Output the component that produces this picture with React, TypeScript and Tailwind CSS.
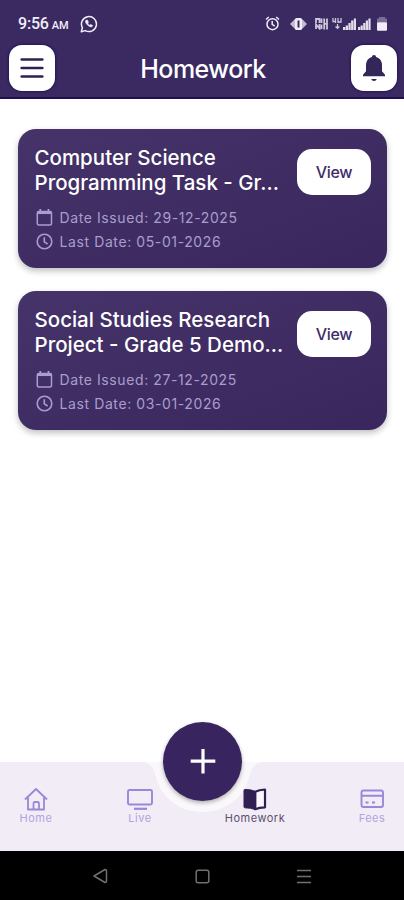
import type { ReactNode } from "react";
import clsx from "clsx";

const homework = [
  { id: 1, lines: ["Computer Science", "Programming Task - Gr..."], issued: "29-12-2025", last: "05-01-2026" },
  { id: 2, lines: ["Social Studies Research", "Project - Grade 5 Demo..."], issued: "27-12-2025", last: "03-01-2026" },
];

function StatusBar() {
  return (
    <div className="flex h-[45px] items-center pt-[2px] pl-[18px] pr-[17px] text-[#f1edf8]">
      <div className="flex items-baseline font-['Roboto',sans-serif] font-medium leading-none">
        <span className="text-[16px] tracking-[-0.2px]">9:56</span>
        <span className="ml-[3px] text-[11px]">AM</span>
      </div>
      <svg className="ml-[11px] size-[18px]" viewBox="0 0 18 18" fill="none" stroke="currentColor" strokeWidth="1.5">
        <path d="M1.3 16.7l1.1-4A7.5 7.5 0 1 1 5.3 15.6z" strokeLinejoin="round" />
        <path d="M6 5.2c-1 1-.6 2.6 1.3 4.6 2 2 3.8 2.6 4.9 1.6l.5-.8-1.9-1.2-1 .8c-1-.4-1.7-1.2-2-2l.7-.9L7.4 5z" fill="currentColor" strokeWidth="0.6" />
      </svg>
      <div className="ml-auto flex items-center">
        <svg className="size-[15px]" viewBox="0 0 15 15" fill="none" stroke="currentColor" strokeWidth="1.5">
          <circle cx="7.5" cy="8.2" r="5.5" />
          <path d="M7.2 5v3.4l2.5 1.7M1 3.5l2.8-2.5M14 3.5l-2.8-2.5" />
        </svg>
        <svg className="ml-[10px] h-[14px] w-[17px]" viewBox="0 0 17 14" fill="currentColor">
          <path d="M0 7l5-5h7l5 5-5 5H5z" opacity="0.75" />
          <rect x="5" y="1" width="7" height="12" rx="1.5" />
          <rect x="7.5" y="3.5" width="2" height="7" fill="#3a2a61" />
        </svg>
        <svg className="ml-[8px] h-[12px] w-[13px]" viewBox="0 0 13 12" fill="none" stroke="currentColor" strokeWidth="1.8" opacity="0.8">
          <path d="M1 5V1h3.500v4M1 11V6.500l3.500 4V6M6.500 .5v4.500M6.500 6.500V11M9.200 .5v11M12 .5v11M9.200 5.800h3" />
        </svg>
        <svg className="ml-[4px] h-[14px] w-[39px]" viewBox="0 0 39 14" fill="currentColor">
          <path d="M1 1v3.500h3M3.500 1v5M6 1v5M9 1v4H6M5.500 7v4M3.500 9.500l2 1.800 1.800-1.800" fill="none" stroke="currentColor" strokeWidth="1.3" opacity="0.8" />
          <path d="M11 10h2.3v3H11zM13.700 8.500H16V13h-2.300zM16.400 6h2.300v7h-2.300zM19.100 3.500h2.300V13h-2.300zM21.800 1.500H24V13h-2.200z" opacity="0.92" />
          <path d="M26 10h2.200v3H26zM28.600 8.500h2.200V13h-2.200zM31.200 6h2.200v7h-2.200zM33.800 3.500H36V13h-2.200zM36.400 1.500h2.200V13h-2.200z" opacity="0.92" />
        </svg>
        <svg className="ml-[6px] h-[14px] w-[10px]" viewBox="0 0 10 14" fill="currentColor">
          <path d="M2 0h6v1.500h2V5.500H0V1.500h2z" opacity="0.35" />
          <rect y="5.2" width="10" height="8.5" rx="1" />
        </svg>
      </div>
    </div>
  );
}

function Header() {
  return (
    <header className="h-[99px] shrink-0 border-b-2 border-[#211050] bg-[#3a2a61]">
      <StatusBar />
      <div className="flex items-center justify-between pr-[7px] pl-[9px]">
        <button className="flex size-[46px] items-center justify-center rounded-[13px] bg-white text-[#2f2056] shadow-[0_0_2px_1px_#281659]">
          <svg className="h-[22px] w-[24px]" viewBox="0 0 24 22" stroke="currentColor" strokeWidth="2.7" strokeLinecap="round">
            <path d="M1.700 2.500h20.600M1.700 11h20.600M1.700 19.500h20.600" />
          </svg>
        </button>
        <h1 className="pt-px text-[25px] leading-[40px] font-medium tracking-[-0.5px] text-white">Homework</h1>
        <button className="flex size-[46px] items-center justify-center rounded-[13px] bg-white text-[#34255b] shadow-[0_0_2px_1px_#281659]">
          <svg className="h-[28px] w-[24px]" viewBox="0 0 24 28" fill="currentColor">
            <path d="M12 1c1.300 0 2 .8 2 1.900 4 1 6 4.300 6 8.300v6l3 3.600v1.400H1v-1.400l3-3.600v-6c0-4 2-7.300 6-8.300C10 1.800 10.700 1 12 1zM9.300 25h5.400c-.3 1.200-1.300 2-2.700 2s-2.400-.8-2.700-2z" />
          </svg>
        </button>
      </div>
    </header>
  );
}

function MetaRow({ icon, text }: { icon: ReactNode; text: string }) {
  return (
    <div className="flex h-6 items-center gap-[7px] pl-px text-[#a99dce]">
      {icon}
      <span className="text-[14px] tracking-[0.6px]">{text}</span>
    </div>
  );
}

const calendarIcon = (
  <svg className="size-[17px]" viewBox="0 0 17 17" fill="none" stroke="currentColor" strokeWidth="1.5">
    <rect x="1.3" y="2.5" width="14.2" height="13.5" rx="1.5" />
    <path d="M1.300 3.800h14.200" strokeWidth="2.5" />
    <path d="M4.300 0v3M12.500 0v3" strokeWidth="1.8" />
  </svg>
);

const clockIcon = (
  <svg className="size-[17px]" viewBox="0 0 17 17" fill="none" stroke="currentColor" strokeWidth="1.6">
    <circle cx="8.5" cy="8.5" r="7.3" />
    <path d="M8.300 4.300v4.500l3.300 2.200" />
  </svg>
);

function HomeworkCard({ item }: { item: (typeof homework)[number] }) {
  return (
    <div className="h-[139px] rounded-[18px] bg-gradient-to-br from-[#453369] to-[#39265d] pt-[16px] pr-[16px] pl-[16.5px] shadow-[0_3px_6px_rgba(0,0,0,0.25)]">
      <div className="flex items-start justify-between">
        <h2 className="text-[20.5px] leading-[25px] font-medium whitespace-nowrap text-white">
          {item.lines.map((line) => (
            <span key={line} className="block">{line}</span>
          ))}
        </h2>
        <button className="mt-[4px] h-[46px] w-[74px] shrink-0 rounded-[15px] bg-white text-[16px] font-medium tracking-[-0.3px] text-[#3d2c66]">
          View
        </button>
      </div>
      <div className="mt-[11px]">
        <MetaRow icon={calendarIcon} text={`Date Issued: ${item.issued}`} />
        <MetaRow icon={clockIcon} text={`Last Date: ${item.last}`} />
      </div>
    </div>
  );
}

function NavItem({ label, active, className, children }: { label: string; active?: boolean; className: string; children: ReactNode }) {
  return (
    <div className={clsx("flex flex-col items-center", active ? "text-[#302052]" : "text-[#9b87d8]", className)}>
      <svg className="h-[24px] w-[26px]" viewBox="0 0 26 24" fill="none" stroke="currentColor" strokeWidth="1.9" strokeLinejoin="round">
        {children}
      </svg>
      <span className={clsx("text-[11px] leading-[14px] tracking-[0.5px]", active ? "text-[#5c5070]" : "text-[#b3a3df]")}>{label}</span>
    </div>
  );
}

function BottomNav() {
  return (
    <nav className="relative h-[89px] shrink-0 bg-[#f1ecf6]">
      <svg className="absolute top-0 left-[140px] h-[52px] w-[125px]" viewBox="0 0 125 52" fill="#fbf8fc">
        <path d="M0 0c9 0 13 4 15 12C20 35 39 50 62.500 50S105 35 110 12c2-8 6-12 15-12z" />
      </svg>
      <div className="relative flex pt-[25px]">
        <NavItem label="Home" className="ml-[16px] w-[40px]">
          <path d="M2 12.500L13 2l11 10.500M5 10v12.500h16V10M10.500 22.500v-6q0-1.500 1.500-1.500h2.500q1.500 0 1.500 1.500v6" strokeWidth="1.8" />
        </NavItem>
        <NavItem label="Live" className="ml-[64px] w-[40px]">
          <rect x="1" y="3" width="24" height="14.5" rx="1.5" />
          <path d="M7 21.800h13" strokeWidth="2.2" />
        </NavItem>
        <NavItem label="Homework" active className="ml-[60px] w-[70px]">
          <path d="M2 3.500q0-1 1-1 6-.2 10 1.800v18.200q-4-1.700-10-1.700-1 0-1-1z" fill="currentColor" strokeWidth="1" />
          <path d="M13.300 4.800q3.500-2 9.700-2.300v17.800q-6.200.2-9.700 1.900z" fill="#faf8fc" strokeWidth="2.2" />
        </NavItem>
        <NavItem label="Fees" className="ml-[62px] w-[40px]">
          <rect x="2.5" y="3.5" width="21.5" height="16.5" rx="2" />
          <path d="M2.500 8.800h21.500M6.500 15.500h3M13 15.500h3" />
        </NavItem>
      </div>
      <button className="absolute -top-[40px] left-[163px] flex size-[79px] items-center justify-center rounded-full bg-[#38255f] text-white shadow-[0_2px_4px_rgba(0,0,0,0.3)]">
        <svg className="size-[26px]" viewBox="0 0 26 26" stroke="currentColor" strokeWidth="3.2">
          <path d="M13 0v24.500M.7 12.200h24.600" />
        </svg>
      </button>
    </nav>
  );
}

function SystemBar() {
  return (
    <div className="h-[49px] shrink-0 bg-black text-[#707070]">
      <div className="flex items-center pt-[17px] pl-[92px]">
        <svg className="size-[16px]" viewBox="0 0 16 16" fill="none" stroke="currentColor" strokeWidth="1.5" strokeLinejoin="round">
          <path d="M2 8l11-6.500q1.500 0 1.500 1.500v10q0 1.500-1.500 1.500z" />
        </svg>
        <svg className="ml-[87px] size-[15px]" viewBox="0 0 15 15" fill="none" stroke="currentColor" strokeWidth="1.5">
          <rect x="1.2" y="1.2" width="12.6" height="12.6" rx="2" />
        </svg>
        <svg className="ml-[86px] size-[15px]" viewBox="0 0 15 15" stroke="currentColor" strokeWidth="1.7">
          <path d="M1 1.500h14M1 7.500h14M1 13.500h14" />
        </svg>
      </div>
    </div>
  );
}

export default function App() {
  return (
    <div className="flex h-[900px] w-[404px] flex-col overflow-hidden bg-white font-['Inter',sans-serif]">
      <Header />
      <main className="flex flex-1 flex-col gap-[23px] pt-[29.5px] pr-[17px] pl-[18px]">
        {homework.map((item) => (
          <HomeworkCard key={item.id} item={item} />
        ))}
      </main>
      <BottomNav />
      <SystemBar />
    </div>
  );
}
